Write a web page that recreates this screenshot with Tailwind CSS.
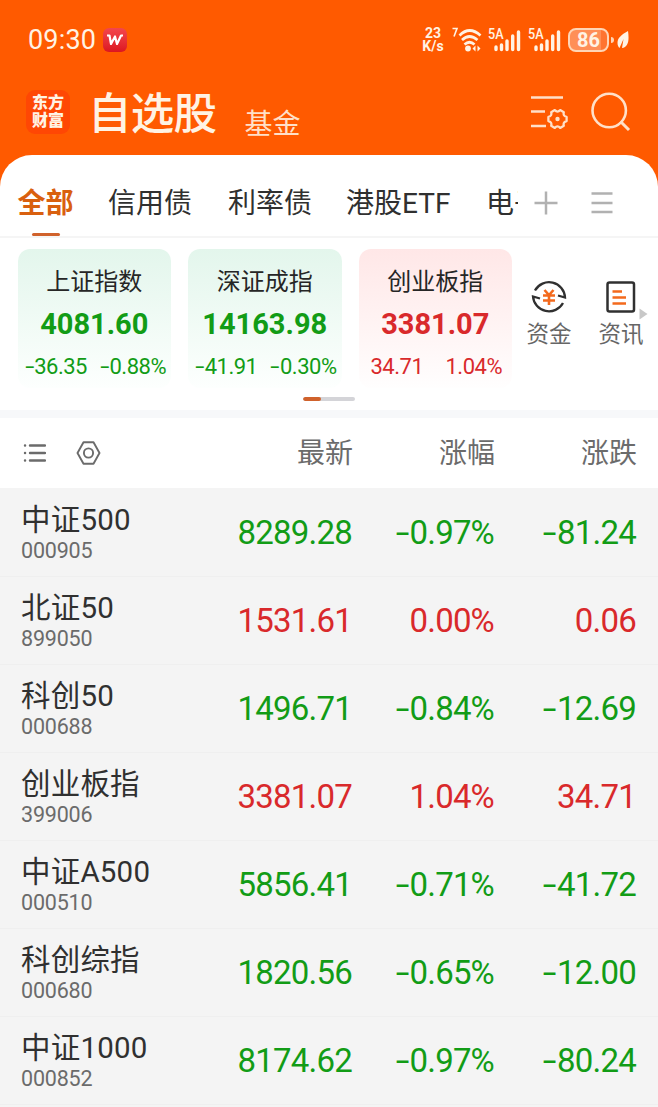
<!DOCTYPE html>
<html lang="zh-CN">
<head>
  <meta charset="UTF-8" />
  <meta name="viewport" content="width=device-width, initial-scale=1.0" />
  <title>自选股</title>
  <script src="https://cdn.jsdelivr.net/npm/@tailwindcss/browser@4"></script>
</head>
<body class="bg-[#ff5a00] font-[Roboto,'Noto_Sans_CJK_SC',sans-serif] w-[658px] h-[1107px] overflow-hidden">
  <!-- Status bar -->
  <div class="h-20 pl-7 pr-[29px] flex items-center justify-between text-[#fff3e4]">
    <div class="flex items-center gap-[7px]">
      <span class="text-[27px] leading-8 tracking-[0.2px]">09:30</span>
      <span class="size-6 rounded-md bg-gradient-to-b from-[#f4454c] to-[#dc1420] flex items-center justify-center">
        <svg class="w-4 h-3" viewBox="0 0 16 12" fill="none" stroke="#fff" stroke-width="2.2" stroke-linejoin="round"><path d="M0 1.5H2.5L4 10L8 2.5L10 10L14 1.5H16" /></svg>
      </span>
    </div>
    <div class="flex items-center h-7">
      <div class="w-[24px] flex flex-col items-center text-[14px] leading-[13px] font-bold"><span>23</span><span>K/s</span></div>
      <svg class="ml-[7px] w-[30px] h-7" viewBox="0 0 30 28" fill="none" stroke="#fff3e4" stroke-width="2.7">
        <path d="M0.500 2.500H5L2 10.500" stroke-width="1.6" />
        <path d="M7.500 9.500Q17.500 -0.500 28.500 9.500M10 14Q17.500 7 25.500 14M12.500 18.500Q17.500 14 22.500 18.500" />
        <circle cx="16" cy="22.500" r="2.900" fill="#fff3e4" stroke="none" />
        <path d="M23.500 19.500V25.500L20.500 22.500ZM25.500 19.500V25.500L28.500 22.500Z" fill="#fff3e4" stroke="none" />
      </svg>
      <div class="relative ml-[7px] w-8 h-7">
        <span class="absolute -left-px top-0 text-[14px] leading-[17px] font-medium origin-left scale-x-90">5A</span>
        <svg class="w-8 h-7" viewBox="0 0 32 28" stroke="#fff3e4" stroke-width="3.4" stroke-linecap="round"><path d="M7 21V23.500M12.500 19V23.500M18 15V23.500M23.700 10V23.500M29.500 6V23.500" /></svg>
      </div>
      <div class="relative ml-[8px] w-8 h-7">
        <span class="absolute -left-px top-0 text-[14px] leading-[17px] font-medium origin-left scale-x-90">5A</span>
        <svg class="w-8 h-7" viewBox="0 0 32 28" stroke="#fff3e4" stroke-width="3.4" stroke-linecap="round"><path d="M7 21V23.500M12.500 19V23.500M18 15V23.500M23.700 10V23.500M29.500 6V23.500" /></svg>
      </div>
      <div class="ml-[7px] w-[41px] h-[24px] rounded-[8px] border-2 border-[#ffd5b5] bg-gradient-to-r from-[#ff8f57] from-85% to-[#ff7430] to-85% flex items-center justify-center text-[20px] leading-none font-bold">86</div>
      <div class="ml-[2px] w-[3px] h-[6px] rounded-r bg-[#ffd5b5]"></div>
      <svg class="ml-[3px] w-[12px] h-[18px]" viewBox="0 0 12 18"><path d="M11 0C4 4 0.500 7 0.500 12C0.500 14.500 1.500 16 2.500 17L6.500 8L5 17C11 16 12.500 10 11 0Z" fill="#fff3e4" /></svg>
    </div>
  </div>

  <!-- Title bar -->
  <div class="h-[75px] pl-[26px] pr-[27px] flex items-start text-[#fff3e4]">
    <div class="mt-[10px] size-11 rounded-[9px] bg-[#ff4704] pt-[4px] text-center text-[16px] leading-[18px] font-black text-[#fff3e4]">东方<br />财富</div>
    <div class="ml-[18px] mt-[3px] text-[43.5px] leading-[64px] tracking-[-0.7px] font-medium">自选股</div>
    <div class="ml-[28px] mt-[25px] text-[28px] leading-10 text-[#ffe0c8]">基金</div>
    <svg class="ml-auto mt-[14px] w-[40px] h-[38px]" viewBox="0 0 40 38" fill="none" stroke="#ffe0c8" stroke-width="2.6">
      <path d="M1 3.500H33M1 17.500H15M1 32H16" />
      <path transform="translate(27.500 25)" d="M9.100 -2.100V2.100Q5.200 3 6.300 6.800L2.700 8.900Q0 6 -2.700 8.900L-6.300 6.800Q-5.200 3 -9.100 2.100V-2.100Q-5.200 -3 -6.300 -6.800L-2.700 -8.900Q0 -6 2.700 -8.900L6.300 -6.800Q5.200 -3 9.100 -2.100Z" stroke-linejoin="round" stroke-width="2.3" />
      <circle cx="27.500" cy="25" r="2.200" fill="#ffe0c8" stroke="none" />
    </svg>
    <svg class="ml-[21px] mt-[12px] w-10 h-10" viewBox="0 0 40 40" fill="none" stroke="#ffe0c8" stroke-width="2.6"><circle cx="18.200" cy="18.500" r="16.700" /><path d="M29.500 29.500L38 38" stroke-width="3" /></svg>
  </div>

  <main class="bg-white rounded-t-[32px] h-[952px] overflow-hidden">
    <!-- Tabs -->
    <div class="h-[83px] pl-[18px] border-b-2 border-[#f5f5f5] flex text-[28px] text-[#303030]">
      <div class="w-[55px] flex flex-col items-center">
        <span class="pt-[29px] h-[79px] leading-10 font-bold text-[#d9600f] whitespace-nowrap">全部</span>
        <span class="w-7 h-[3px] shrink-0 rounded-full bg-[#d0622c]"></span>
      </div>
      <span class="ml-[35px] pt-[29px] leading-10">信用债</span>
      <span class="ml-[36px] pt-[29px] leading-10">利率债</span>
      <span class="ml-[34px] pt-[29px] leading-10 w-[106px] whitespace-nowrap">港股ETF</span>
      <span class="ml-[34px] pt-[29px] leading-10 w-[32px] overflow-hidden whitespace-nowrap">电子</span>
      <svg class="ml-4 mt-[36px] w-6 h-6" viewBox="0 0 24 24" stroke="#b1b1b1" stroke-width="2.5"><path d="M0.500 12H23.500M12 0.500V23.500" /></svg>
      <svg class="ml-[33px] mt-[36px] w-6 h-6" viewBox="0 0 24 24" stroke="#b1b1b1" stroke-width="2.4"><path d="M0.500 2.500H21.500M0.500 12H21.500M0.500 21H21.500" /></svg>
    </div>

    <!-- Index cards -->
    <div class="relative h-[172px] pt-[11px] pl-[17.5px] flex">
      <div id="cards" class="flex gap-[17px]"></div>
      <div class="ml-[14px] w-[46px] pt-[30px] flex flex-col items-center text-[22.5px] leading-8 text-[#666] whitespace-nowrap">
        <svg class="w-9 h-9" viewBox="0 0 36 36" fill="none" stroke="#303030" stroke-width="2.3">
          <path d="M4 11.500A16 16 0 0 1 34 18.500L27 16.500M32 24A16 16 0 0 1 2 17.500L9 19.500" />
          <path d="M13.500 11L18 16L22.500 11M12 16.500H24M12 21.500H24M18 16V26" stroke="#f36a1d" stroke-width="2.6" />
        </svg>
        <span class="mt-[3px]">资金</span>
      </div>
      <div class="ml-[26px] w-[46px] pt-[30px] flex flex-col items-center text-[22.5px] leading-8 text-[#666] whitespace-nowrap">
        <svg class="w-9 h-9" viewBox="0 0 36 36" fill="none" stroke="#303030" stroke-width="2.5">
          <rect x="4.500" y="3.500" width="26.500" height="29" rx="2" />
          <path d="M9.500 12.500H19M9.500 18.500H23M9.500 24.500H23" stroke="#f36a1d" stroke-width="2.6" />
        </svg>
        <span class="mt-[3px]">资讯</span>
      </div>
      <svg class="absolute left-[639px] top-[70px] w-[9px] h-3" viewBox="0 0 9 12"><path d="M0.500 0.500L8.500 6L0.500 11.500Z" fill="#c8c8c8" /></svg>
      <div class="absolute left-[303px] top-[159px] w-[52px] h-[4px] rounded-full bg-[#d4d4d8] overflow-hidden">
        <div class="w-[18px] h-full rounded-full bg-[#d0622c]"></div>
      </div>
    </div>
    <div class="h-2 bg-[#f7f8fa]"></div>

    <!-- Table header -->
    <div class="h-[70px] pl-[22px] flex items-center text-[28px] text-[#6b6b6b]">
      <svg class="w-6 h-6" viewBox="0 0 24 24" fill="none" stroke="#6b6b6b" stroke-width="2.4" stroke-linecap="round"><path d="M8 4.500H23M8 12H23M8 19.500H23M3 4.500H3.100M3 12H3.100M3 19.500H3.100" /></svg>
      <svg class="ml-[30px] w-[26px] h-6" viewBox="0 0 26 24" fill="none" stroke="#6b6b6b" stroke-width="1.9" stroke-linejoin="round"><path d="M7.500 1.200H17.500L23.500 12L17.500 22.800H7.500L1.500 12Z" /><circle cx="12.500" cy="12" r="4.600" /></svg>
      <span class="w-[251px] pt-[2px] text-right">最新</span>
      <span class="w-[142px] pt-[2px] text-right">涨幅</span>
      <span class="w-[142px] pt-[2px] text-right">涨跌</span>
    </div>
    <div id="rows" class="h-[620px] pt-px bg-[#f4f4f4]"></div>
  </main>

  <script>
    const cards = [
      ['上证指数', '4081.60', '-36.35', '-0.88%', false],
      ['深证成指', '14163.98', '-41.91', '-0.30%', false],
      ['创业板指', '3381.07', '34.71', '1.04%', true],
    ];
    const stocks = [
      ['中证500', '000905', '8289.28', '-0.97%', '-81.24', false],
      ['北证50', '899050', '1531.61', '0.00%', '0.06', true],
      ['科创50', '000688', '1496.71', '-0.84%', '-12.69', false],
      ['创业板指', '399006', '3381.07', '1.04%', '34.71', true],
      ['中证A500', '000510', '5856.41', '-0.71%', '-41.72', false],
      ['科创综指', '000680', '1820.56', '-0.65%', '-12.00', false],
      ['中证1000', '000852', '8174.62', '-0.97%', '-80.24', false],
    ];

    // widen the minus sign a little
    const num = s => s.replace('-', '<span class="inline-block origin-right scale-x-150 mr-[0.05em]">-</span>');

    document.getElementById('cards').innerHTML = cards.map(([name, price, diff, pct, up]) => `
      <div class="w-[153.5px] h-[139px] rounded-xl bg-gradient-to-b ${up ? 'from-[#ffe7e7] to-[#fffefe] text-[#d9292b]' : 'from-[#e3f6ec] to-[#fdfffe] text-[#129c16]'} flex flex-col items-center whitespace-nowrap">
        <div class="mt-[17px] text-[24px] leading-8 text-[#262626]">${name}</div>
        <div class="mt-[8px] text-[29px] leading-9 font-bold">${price}</div>
        <div class="mt-[9px] w-full ${up ? 'pl-3 pr-[10px]' : 'pl-[10px] pr-[5px]'} flex justify-between text-[22px] leading-8 tracking-[-0.5px]"><span>${num(diff)}</span><span>${num(pct)}</span></div>
      </div>`).join('');

    document.getElementById('rows').innerHTML = stocks.map(([name, code, price, pct, diff, up]) => `
      <div class="h-[88px] pl-[21px] border-b border-[#efefef] flex items-center">
        <div class="w-[170px]">
          <div class="text-[29.5px] leading-9 text-[#303030] tracking-[0.2px]">${name}</div>
          <div class="text-[21.5px] leading-[26px] text-[#6b6b6b] tracking-[-0.2px]">${code}</div>
        </div>
        <div class="flex text-right text-[33px] tracking-[-0.8px] ${up ? 'text-[#d9292b]' : 'text-[#129c16]'}">
          <span class="w-[161px]">${num(price)}</span>
          <span class="w-[142px]">${num(pct)}</span>
          <span class="w-[142px]">${num(diff)}</span>
        </div>
      </div>`).join('');
  </script>
</body>
</html>
